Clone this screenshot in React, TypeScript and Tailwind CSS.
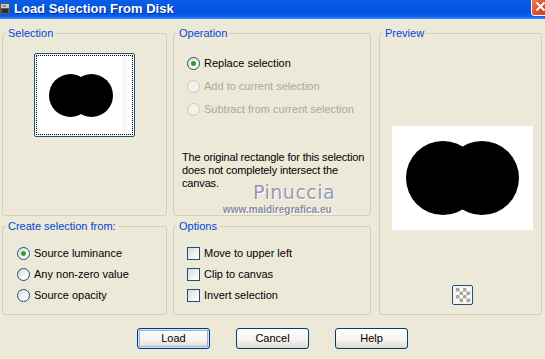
import clsx from 'clsx';

const font = { fontFamily: '"Liberation Sans", Arial, sans-serif' };

function Radio({ checked, disabled }: { checked?: boolean; disabled?: boolean }) {
  return (
    <span
      className={clsx(
        'w-[13px] h-[13px] rounded-full border flex items-center justify-center shrink-0',
        disabled
          ? 'border-[#cac8bb] bg-[#f2f1ea]'
          : 'border-[#1c5180] bg-[linear-gradient(135deg,#d8d8d2,#f7f7f4_60%,#ffffff)]'
      )}
    >
      {checked && <span className="w-[5px] h-[5px] rounded-full bg-[#2da02d]" />}
    </span>
  );
}

function Check() {
  return (
    <span className="w-[13px] h-[13px] border border-[#1c5180] shrink-0 bg-[linear-gradient(135deg,#d8d8d2,#f4f4f0_60%,#ffffff)]" />
  );
}

function Row({
  label,
  control,
  disabled,
  height,
}: {
  label: string;
  control: React.ReactNode;
  disabled?: boolean;
  height: string;
}) {
  return (
    <div className={clsx('flex items-center gap-[4px]', height)}>
      {control}
      <span className={disabled ? 'text-[#aca899]' : 'text-black'}>{label}</span>
    </div>
  );
}

function Group({
  title,
  className,
  children,
}: {
  title: string;
  className?: string;
  children: React.ReactNode;
}) {
  return (
    <fieldset className={clsx('border border-[#d0d0bf] rounded-[3px] min-w-0 h-full', className)}>
      <legend className="ml-[3px] px-[2px] text-[#0046d5] leading-[13px]">{title}</legend>
      {children}
    </fieldset>
  );
}

function Blob({ w, h }: { w: number; h: number }) {
  const r = h / 2;
  return (
    <svg width={w} height={h} viewBox={`0 0 ${w} ${h}`}>
      <circle cx={r} cy={r} r={r} fill="#000" />
      <circle cx={w - r} cy={r} r={r} fill="#000" />
    </svg>
  );
}

function Button({ label, focused }: { label: string; focused?: boolean }) {
  return (
    <button
      className={clsx(
        'w-[73px] h-[21px] border border-[#003c74] rounded-[3px] bg-[linear-gradient(to_bottom,#ffffff,#f4f3ee_60%,#dcd8cd)] text-black leading-none',
        focused && 'shadow-[inset_0_0_0_1px_#cee7ff,inset_0_0_0_2px_#8fb3ea]'
      )}
    >
      {label}
    </button>
  );
}

export default function App() {
  return (
    <div
      className="w-[545px] h-[359px] overflow-hidden bg-[#ece9d8] text-[11px] text-black"
      style={font}
    >
      {/* title bar */}
      <div className="h-[19px] flex items-start overflow-hidden bg-[linear-gradient(to_bottom,#0a5de6,#0054e3_65%,#0a5ef0_85%,#3a8cf6)]">
        <svg width="11" height="13" viewBox="0 0 11 13" className="mt-[2px]">
          <rect x="0" y="1" width="10" height="11" fill="#5a5a5a" />
          <rect x="1" y="2" width="8" height="4" fill="#c8c8c8" />
          <rect x="2" y="7" width="6" height="4" fill="#2b2b2b" />
          <rect x="3" y="3" width="3" height="2" fill="#888" />
        </svg>
        <span className="ml-[3px] mt-[1px] text-white font-bold text-[13px] leading-[16px] [text-shadow:1px_1px_0_#0a2b8c]">
          Load Selection From Disk
        </span>
        <div className="ml-auto -mt-[5px] -mr-[7px] w-[21px] h-[21px] rounded-[3px] border border-white bg-[linear-gradient(135deg,#f08a63,#e0532d_50%,#c43d1a)] flex items-center justify-center">
          <svg width="11" height="11" viewBox="0 0 11 11" className="mt-[2px] -ml-[2px]">
            <path d="M1.5 1.5 L9.5 9.5 M9.5 1.5 L1.5 9.5" stroke="#fff" strokeWidth="2" />
          </svg>
        </div>
      </div>

      {/* groups */}
      <div className="pl-[2px] pt-[8px] grid grid-cols-[165px_198px_165px] grid-rows-[189px_95px] gap-x-[6px] gap-y-[4px]">
        <Group title="Selection">
          <div className="ml-[31px] mt-[13px] w-[101px] h-[84px] border border-[#1c5180] rounded-[2px] p-[1px] bg-white">
            <div className="w-full h-full border border-dotted border-black flex items-center pl-[12px] bg-[linear-gradient(to_right,#ffffff_89%,#f7f7f7_89%,#f7f7f7_95%,#ffffff_95%)]">
              <Blob w={64} h={43} />
            </div>
          </div>
        </Group>

        <Group title="Operation">
          <div className="relative pl-[13px] pt-[12px]">
            <Row height="h-[23px]" label="Replace selection" control={<Radio checked />} />
            <Row height="h-[23px]" label="Add to current selection" control={<Radio disabled />} disabled />
            <Row height="h-[23px]" label="Subtract from current selection" control={<Radio disabled />} disabled />
            <p className="-ml-[5px] mt-[30px] leading-[13px] whitespace-nowrap tracking-[-0.15px]">
              The original rectangle for this selection
              <br />
              does not completely intersect the
              <br />
              canvas.
            </p>
            <span
              className="absolute left-[79px] top-[141px] text-[19px] leading-[22px] text-[#9799b2] tracking-[0.5px] [text-shadow:1px_1px_0_#ffffff]"
              style={{ fontFamily: '"DejaVu Sans", sans-serif' }}
            >
              Pinuccia
            </span>
            <span className="absolute left-[49px] top-[164px] text-[10px] leading-[12px] font-bold text-[#8a8b9e] [text-shadow:1px_1px_0_#ffffff]">
              www.maidiregrafica.eu
            </span>
          </div>
        </Group>

        <Group title="Preview" className="row-span-2 ml-[2px] w-[163px]">
          <div className="ml-[12px] mt-[86px] w-[141px] h-[104px] bg-white flex items-center justify-center">
            <Blob w={113} h={74} />
          </div>
          <div className="ml-[72px] mt-[55px] w-[21px] h-[20px] border border-[#1c5180] rounded-[2px] bg-[#f4f3ee] flex items-center justify-center">
            <svg width="14" height="14" viewBox="0 0 4 4">
              <rect width="4" height="4" fill="#ffffff" />
              <rect x="0" y="0" width="1" height="1" fill="#a6a6a0" />
              <rect x="2" y="0" width="1" height="1" fill="#a6a6a0" />
              <rect x="1" y="1" width="1" height="1" fill="#a6a6a0" />
              <rect x="3" y="1" width="1" height="1" fill="#a6a6a0" />
              <rect x="0" y="2" width="1" height="1" fill="#a6a6a0" />
              <rect x="2" y="2" width="1" height="1" fill="#a6a6a0" />
              <rect x="1" y="3" width="1" height="1" fill="#a6a6a0" />
              <rect x="3" y="3" width="1" height="1" fill="#a6a6a0" />
            </svg>
          </div>
        </Group>

        <Group title="Create selection from:">
          <div className="pl-[14px] pt-[10px]">
            <Row height="h-[21px]" label="Source luminance" control={<Radio checked />} />
            <Row height="h-[21px]" label="Any non-zero value" control={<Radio />} />
            <Row height="h-[21px]" label="Source opacity" control={<Radio />} />
          </div>
        </Group>

        <Group title="Options">
          <div className="pl-[13px] pt-[10px]">
            <Row height="h-[21px]" label="Move to upper left" control={<Check />} />
            <Row height="h-[21px]" label="Clip to canvas" control={<Check />} />
            <Row height="h-[21px]" label="Invert selection" control={<Check />} />
          </div>
        </Group>
      </div>

      {/* buttons */}
      <div className="mt-[13px] flex justify-center gap-[26px]">
        <Button label="Load" focused />
        <Button label="Cancel" />
        <Button label="Help" />
      </div>
    </div>
  );
}
